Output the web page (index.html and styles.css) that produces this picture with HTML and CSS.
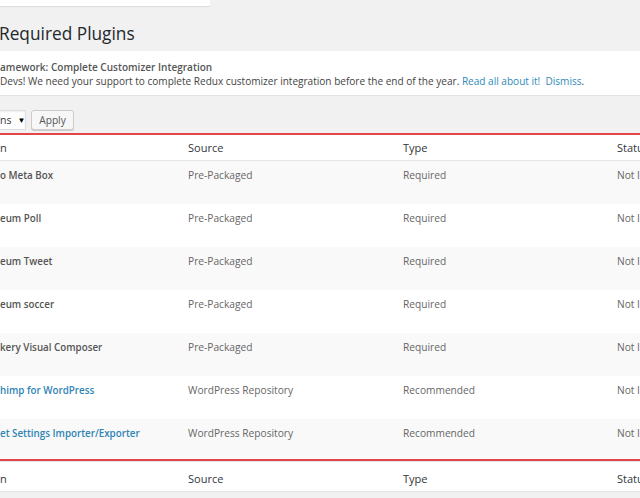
FILE: index.html
```html
<!DOCTYPE html>
<html>
<head>
<meta charset="utf-8">
<link rel="stylesheet" href="styles.css">
</head>
<body>
<div class="topbox"></div>
<h1 class="title">Required Plugins</h1>
<div class="notice">
  <p class="notice-title">amework: Complete Customizer Integration</p>
  <p class="notice-text">Devs! We need your support to complete Redux customizer integration before the end of the year. <a href="#">Read all about it!</a>&nbsp; <a href="#">Dismiss</a>.</p>
</div>
<div class="actions">
  <div class="select">ns <span class="arrow">▼</span></div>
  <button class="btn">Apply</button>
</div>
<div class="table">
  <div class="row head top"><span>n</span><span>Source</span><span>Type</span><span>Status</span></div>
  <div class="row alt"><span class="name">o Meta Box</span><span>Pre-Packaged</span><span>Required</span><span>Not Installed</span></div>
  <div class="row"><span class="name">eum Poll</span><span>Pre-Packaged</span><span>Required</span><span>Not Installed</span></div>
  <div class="row alt"><span class="name">eum Tweet</span><span>Pre-Packaged</span><span>Required</span><span>Not Installed</span></div>
  <div class="row"><span class="name">eum soccer</span><span>Pre-Packaged</span><span>Required</span><span>Not Installed</span></div>
  <div class="row alt"><span class="name">kery Visual Composer</span><span>Pre-Packaged</span><span>Required</span><span>Not Installed</span></div>
  <div class="row"><span class="name link">himp for WordPress</span><span>WordPress Repository</span><span>Recommended</span><span>Not Installed</span></div>
  <div class="row alt last"><span class="name link">et Settings Importer/Exporter</span><span>WordPress Repository</span><span>Recommended</span><span>Not Installed</span></div>
  <div class="row head foot"><span>n</span><span>Source</span><span>Type</span><span>Status</span></div>
</div>
</body>
</html>
```
FILE: styles.css
```css
html, body {
  margin: 0;
  padding: 0;
  background: #f1f1f1;
  overflow: hidden;
  width: 640px;
  height: 498px;
}
body {
  font-family: "Open Sans", "Liberation Sans", sans-serif;
  font-size: 10.2px;
  color: #666;
}
.topbox {
  width: 210px;
  height: 6px;
  background: #fff;
  box-shadow: 0 1px 1px rgba(0,0,0,0.08);
}
.title {
  margin: 16px 0 0 -1px;
  font-size: 17.3px;
  font-weight: 400;
  line-height: 24px;
  color: #23282d;
}
.notice {
  margin-top: 5px;
  background: #fff;
  height: 44px;
  box-shadow: 0 1px 1px rgba(0,0,0,0.06);
  padding-top: 9px;
  box-sizing: border-box;
}
.notice p {
  margin: 0;
  line-height: 14px;
  font-size: 10.05px;
  color: #444;
  white-space: nowrap;
}
.notice-title {
  font-weight: 600;
  color: #555 !important;
}
.notice a {
  color: #2e8ab8;
  text-decoration: none;
}
.actions {
  display: flex;
  gap: 5px;
  margin-top: 15px;
  height: 20px;
}
.select {
  width: 26px;
  height: 20px;
  background: #fff;
  border: 1px solid #ddd;
  border-left: none;
  box-sizing: border-box;
  color: #32373c;
  line-height: 18px;
  font-size: 10.5px;
  display: flex;
  gap: 6px;
  box-shadow: inset 0 1px 2px rgba(0,0,0,0.07);
}
.arrow {
  font-size: 8px;
  color: #000;
}
.btn {
  width: 43px;
  height: 20px;
  background: #f7f7f7;
  border: 1px solid #ccc;
  border-radius: 3px;
  font-family: inherit;
  font-size: 10.2px;
  color: #555;
  padding: 0;
  box-shadow: 0 1px 0 #ccc;
}
.table {
  margin-top: 3px;
  width: 700px;
}
.row {
  display: grid;
  grid-template-columns: 188px 215px 214px 1fr;
  align-items: baseline;
  align-content: start;
  height: 43px;
  padding-top: 7px;
  box-sizing: border-box;
  line-height: 14px;
  white-space: nowrap;
  background: #fff;
}
.row.alt {
  background: #f9f9f9;
}
.row.head {
  height: 27px;
  padding-top: 6px;
  color: #32373c;
  font-size: 11px;
}
.row.top {
  border-top: 2px solid #e4434b;
  border-bottom: 1px solid #e5e5e5;
  height: 28px;
}
.row.foot {
  border-top: 1px solid #e5e5e5;
  height: 30px;
  padding-top: 10px;
  box-shadow: 0 1px 1px rgba(0,0,0,0.05);
}
.row.last {
  border-bottom: 2px solid #e4434b;
  height: 42px;
}
.name {
  font-weight: 600;
  font-size: 9.8px;
  color: #555;
}
.name.link {
  color: #2e84b4;
}
```
